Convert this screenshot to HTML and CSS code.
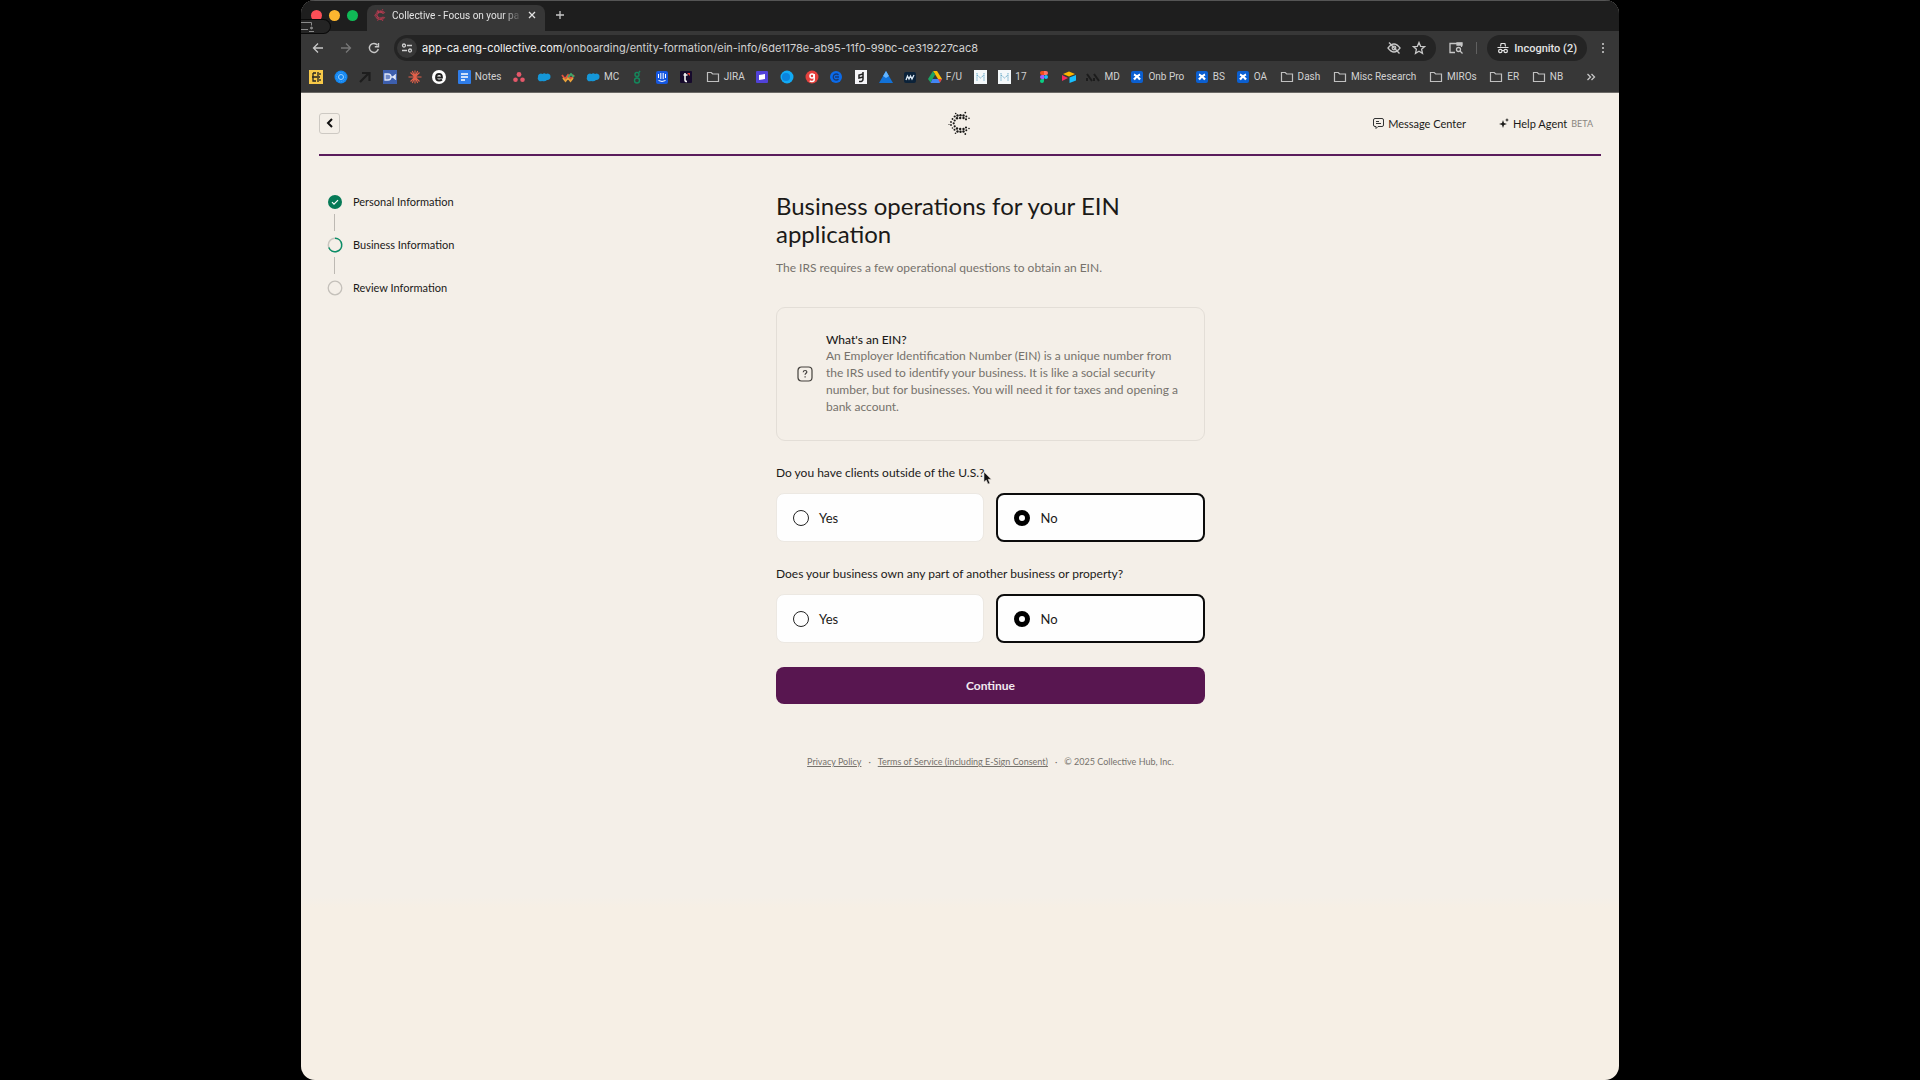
FILE: index.html
```html
<!DOCTYPE html>
<html lang="en">
<head>
<meta charset="utf-8">
<title>Collective - Focus on your passion</title>
<link rel="stylesheet" href="styles.css">
</head>
<body>
<div class="window">
  <header class="chrome">
    <div class="tabstrip">
      <div class="lights"><span class="light red"></span><span class="light yellow"></span><span class="light green"></span></div>
      <div class="share"><svg width="14" height="12" viewBox="0 0 14 12" fill="none" stroke="#8b8b8b"><path d="M0 1.500h10.500v3M0 8.500h7"/><circle cx="10.500" cy="7" r="1" fill="#8b8b8b"/><path d="M8 10.500h5"/></svg></div>
      <div class="tab">
        <svg width="12" height="12" viewBox="0 0 24 24"><use href="#dots" fill="#d2405a" stroke="#d2405a" stroke-width=".6"/></svg>
        <span class="tab-title">Collective - Focus on your pa</span>
        <button class="icon-btn" aria-label="Close tab"><svg width="8" height="8" viewBox="0 0 8 8" stroke="#e3e3e3" stroke-width="1.300"><path d="M1 1l6 6M7 1l-6 6"/></svg></button>
      </div>
      <button class="icon-btn new-tab" aria-label="New tab"><svg width="10" height="10" viewBox="0 0 10 10" stroke="#c7c7c7" stroke-width="1.300"><path d="M5 1v8M1 5h8"/></svg></button>
    </div>
    <div class="toolbar">
      <nav class="nav-btns">
        <button class="icon-btn" aria-label="Back"><svg width="12" height="12" viewBox="0 0 12 12" fill="none" stroke="#c7c7c7" stroke-width="1.300"><path d="M11 6H2M6 1.500L1.500 6 6 10.500"/></svg></button>
        <button class="icon-btn" aria-label="Forward"><svg width="12" height="12" viewBox="0 0 12 12" fill="none" stroke="#777" stroke-width="1.300"><path d="M1 6h9M6 1.500L10.500 6 6 10.500"/></svg></button>
        <button class="icon-btn" aria-label="Reload"><svg width="12" height="12" viewBox="0 0 12 12" fill="none" stroke="#c7c7c7" stroke-width="1.400"><path d="M10.300 7A4.500 4.500 0 1 1 9.500 3.200"/><path d="M10.500 1v3.700H6.800" /></svg></button>
      </nav>
      <div class="address">
        <span class="site-info"><svg width="12" height="12" viewBox="0 0 12 12" fill="none" stroke="#d0d0d0" stroke-width="1.300"><circle cx="3" cy="3.500" r="1.500"/><path d="M6 3.500h5M1 8.500h5"/><circle cx="9" cy="8.500" r="1.500"/></svg></span>
        <span class="url"><b>app-ca.eng-collective.com</b>/onboarding/entity-formation/ein-info/6de1178e-ab95-11f0-99bc-ce319227cac8</span>
        <svg width="14" height="14" viewBox="0 0 14 14" fill="none" stroke="#c7c7c7" stroke-width="1.300"><path d="M1 7q6-8 12 0q-6 8-12 0z"/><circle cx="7" cy="7" r="1.800"/><path d="M2 1.500l10.500 11"/></svg>
        <svg width="14" height="14" viewBox="0 0 14 14" fill="none" stroke="#c7c7c7" stroke-width="1.300"><path d="M7 1.500l1.600 3.800 4 .3-3 2.700.9 4L7 10.200l-3.500 2.100.9-4-3-2.700 4-.3z"/></svg>
      </div>
      <svg class="tab-search" width="14" height="12" viewBox="0 0 14 12" fill="none" stroke="#c7c7c7" stroke-width="1.300"><path d="M6 10.500H1V1.500h11.500V5"/><path d="M8 1h5v2H8z" fill="#c7c7c7"/><circle cx="9.500" cy="7.500" r="2"/><path d="M11 9l2.500 2.500"/></svg>
      <span class="divider"></span>
      <button class="incognito"><svg width="12" height="12" viewBox="0 0 12 12" fill="none" stroke="#e3e3e3" stroke-width="1.200"><path d="M3.500 4.500l.6-3h3.800l.6 3M.5 5.500h11"/><circle cx="3.300" cy="9" r="1.700"/><circle cx="8.700" cy="9" r="1.700"/><path d="M5 8.500h2"/></svg>Incognito (2)</button>
      <button class="icon-btn kebab" aria-label="Menu"><svg width="4" height="12" viewBox="0 0 4 12" fill="#c7c7c7"><circle cx="2" cy="2" r="1.100"/><circle cx="2" cy="6" r="1.100"/><circle cx="2" cy="10" r="1.100"/></svg></button>
    </div>
    <nav class="bookmarks" aria-label="Bookmarks">
      <a href="#"><svg viewBox="0 0 14 14"><path fill="#f7c948" d="M0 0h14v14H0z"/><path d="M4 3v8h3M4 3h3M9 2v4M9 8v4M3 7h8M11 3v2M11 9v2" stroke="#222" stroke-width="1.300" fill="none"/></svg></a>
      <a href="#"><svg viewBox="0 0 14 14"><circle cx="7" cy="7" r="6.500" fill="#1286f0"/><circle cx="7" cy="7" r="2.500" fill="none" stroke="#9ad0ff"/><circle cx="7" cy="7" r="4.500" fill="none" stroke="#4aa5f7" stroke-dasharray="1 1"/></svg></a>
      <a href="#"><svg viewBox="0 0 14 14" fill="none" stroke="#1d1d1d" stroke-width="2.200"><path d="M2 12l9-9M4 3h7.500v8"/></svg></a>
      <a href="#"><svg viewBox="0 0 14 14"><path fill="#3d5fae" d="M0 0h14v14H0z"/><path d="M2 4h3q3 0 3 3t-3 3H2zM8 7h5M13 4.500l-3 2.500 3 2.500" stroke="#dfe6f7" stroke-width="1.300" fill="#6f89c8"/></svg></a>
      <a href="#"><svg viewBox="0 0 14 14" stroke="#e2604a" stroke-width="1.100"><path d="M7 .5v13M.5 7h13M2.500 2.500l9 9M11.500 2.500l-9 9M4.300 1l5.400 12M9.700 1L4.300 13"/></svg></a>
      <a href="#"><svg viewBox="0 0 14 14"><circle cx="7" cy="7" r="7" fill="#fff"/><path d="M4 7.500h6q0-3.500-3-3.500t-3 3.500q0 3 3 3 2 0 3-1" fill="none" stroke="#222" stroke-width="1.800"/></svg></a>
      <a href="#"><svg viewBox="0 0 14 14"><rect x="1" width="13" height="14" rx="1" fill="#2f7de9"/><path d="M4 4h7M4 7h7M4 10h4" stroke="#fff" stroke-width="1.500"/></svg>Notes</a>
      <a href="#"><svg viewBox="0 0 14 14" fill="#e4586a"><circle cx="7" cy="4.500" r="2.400"/><circle cx="3.500" cy="9.800" r="2.300"/><circle cx="10.500" cy="9.800" r="2.300"/></svg></a>
      <a href="#"><svg viewBox="0 0 14 14"><use href="#cloud"/></svg></a>
      <a href="#"><svg viewBox="0 0 14 14" fill="none" stroke-width="1.800"><path d="M1 5l3 4 3-4 3 4 3-4" stroke="#e5533d"/><path d="M2 8l2.500 3L7 8l2.500 3L12 8" stroke="#e9a23b"/><path d="M7 7l3-3 3 3" stroke="#3fa66b"/></svg></a>
      <a href="#"><svg viewBox="0 0 14 14"><use href="#cloud"/></svg>MC</a>
      <a href="#"><svg viewBox="0 0 14 14" fill="none" stroke="#14885c" stroke-width="1.400"><circle cx="7" cy="4.500" r="2"/><path d="M9 2.500l1-1.500M7 6.500v1"/><circle cx="7" cy="10.500" r="2.500"/></svg></a>
      <a href="#"><svg viewBox="0 0 14 14"><rect x="1" y="1" width="12" height="13" rx="2" fill="#1557e0"/><path d="M3.500 4v4M5.800 3v6M8.200 3v6M10.500 4v4M3.500 10.500q3.500 2 7 0" stroke="#fff" fill="none"/></svg></a>
      <a href="#"><svg viewBox="0 0 14 14"><rect x="1" y="1" width="12" height="12" rx="1" fill="#160a2c"/><path d="M6 3v7q0 1.500 2 1.500M4.500 5h4" stroke="#f4f4f4" stroke-width="1.600" fill="none"/><path d="M8 3h3v3z" fill="#e33c35"/></svg></a>
      <a href="#" class="folder"><svg viewBox="0 0 14 14"><use href="#folder"/></svg>JIRA</a>
      <a href="#"><svg viewBox="0 0 14 14"><rect x="1" y="1" width="12" height="12" rx="1" fill="#5142d8"/><path d="M4 5l6-1v5l-6 1z" fill="#fff"/></svg></a>
      <a href="#"><svg viewBox="0 0 14 14"><circle cx="7" cy="7" r="6.500" fill="#12aaf5"/><circle cx="6" cy="7" r="4" fill="#0a84dd"/></svg></a>
      <a href="#"><svg viewBox="0 0 14 14"><circle cx="7" cy="7" r="6.500" fill="#e4413d"/><path d="M9.200 4v5.500q0 2-2.200 2-1.500 0-2.200-.8" fill="none" stroke="#fff" stroke-width="1.500"/><circle cx="7" cy="6" r="2" fill="none" stroke="#fff" stroke-width="1.500"/></svg></a>
      <a href="#"><svg viewBox="0 0 14 14"><circle cx="7" cy="7" r="6" fill="#0b6bea"/><path d="M9.500 5a3 3 0 1 0 0 4M6 7h4" fill="none" stroke="#173a75" stroke-width="1.300"/></svg></a>
      <a href="#"><svg viewBox="0 0 14 14"><path fill="#f5f5f8" d="M1 0h12v14H1z"/><path d="M9 2v7q0 3-4 2.500M9 4l-4 1v3l4-1" fill="none" stroke="#222" stroke-width="1.500"/></svg></a>
      <a href="#"><svg viewBox="0 0 14 14"><path d="M7 1l7 12H0z" fill="#1272d8"/><path d="M7 1l3 5-3 2-3-2z" fill="#62b4ff"/></svg></a>
      <a href="#"><svg viewBox="0 0 14 14"><rect x="1" y="2" width="12" height="11" rx="2" fill="#0b2239"/><path d="M3 10l1.500-4L6 9l1.500-3L9 9l2-4" stroke="#dbe7f2" stroke-width="1.300" fill="none"/></svg></a>
      <a href="#"><svg viewBox="0 0 14 14"><path d="M5 1h4l5 8h-4z" fill="#fbbc04"/><path d="M5 1l2.200 3.500L2.500 12.500 0 9z" fill="#1ea362"/><path d="M4.500 9H14l-2.500 4H2.500z" fill="#4285f4"/><path d="M10 9h4l-2 3.500z" fill="#ea4335"/></svg>F/U</a>
      <a href="#"><svg viewBox="0 0 14 14"><use href="#mark"/></svg></a>
      <a href="#"><svg viewBox="0 0 14 14"><use href="#mark"/></svg>17</a>
      <a href="#"><svg viewBox="0 0 14 14"><path d="M7 1H5a2 2 0 0 0 0 4h2z" fill="#f24e1e"/><path d="M7 1h2a2 2 0 0 1 0 4H7z" fill="#ff7262"/><path d="M7 5H5a2 2 0 0 0 0 4h2z" fill="#a259ff"/><circle cx="9" cy="7" r="2" fill="#1abcfe"/><path d="M7 9H5a2 2 0 1 0 2 2z" fill="#0acf83"/></svg></a>
      <a href="#"><svg viewBox="0 0 14 14"><path d="M1 4l6-2.500L13 4 7 6.500z" fill="#fcb400"/><path d="M7.500 7.500L14 5v5.500L7.500 13z" fill="#18bfff"/><path d="M0 5l6 3-6 3z" fill="#f82b60"/></svg></a>
      <a href="#"><svg viewBox="0 0 14 14" stroke="#1c1c1c" stroke-width="2"><path d="M1 4l5 7M8 4l5 7M1 8v3M8 8v3"/></svg>MD</a>
      <a href="#"><svg viewBox="0 0 14 14"><use href="#xapp"/></svg>Onb Pro</a>
      <a href="#"><svg viewBox="0 0 14 14"><use href="#xapp"/></svg>BS</a>
      <a href="#"><svg viewBox="0 0 14 14"><use href="#xapp"/></svg>OA</a>
      <a href="#" class="folder"><svg viewBox="0 0 14 14"><use href="#folder"/></svg>Dash</a>
      <a href="#" class="folder"><svg viewBox="0 0 14 14"><use href="#folder"/></svg>Misc Research</a>
      <a href="#" class="folder"><svg viewBox="0 0 14 14"><use href="#folder"/></svg>MIROs</a>
      <a href="#" class="folder"><svg viewBox="0 0 14 14"><use href="#folder"/></svg>ER</a>
      <a href="#" class="folder"><svg viewBox="0 0 14 14"><use href="#folder"/></svg>NB</a>
      <button class="icon-btn more" aria-label="More bookmarks"><svg width="10" height="8" viewBox="0 0 10 8" fill="none" stroke="#c7c7c7" stroke-width="1.300"><path d="M1.500 1l3 3-3 3M5.500 1l3 3-3 3"/></svg></button>
    </nav>
  </header>

  <div class="page">
    <header class="topbar">
      <button class="back" aria-label="Go back"><svg width="8" height="10" viewBox="0 0 8 10" fill="none" stroke="#111" stroke-width="2"><path d="M6 1L2 5l4 4"/></svg></button>
      <a href="#" class="logo" aria-label="Collective"><svg width="24" height="24" viewBox="0 0 24 24"><use href="#dots" fill="#1b1a18"/></svg></a>
      <nav class="links">
        <a href="#"><svg width="11" height="11" viewBox="0 0 11 11" fill="none" stroke="#333"><path d="M2 .5h7q1.500 0 1.500 1.500v5q0 1.500-1.500 1.500H5L3 10.500v-2H2Q.5 8.500.5 7V2Q.5.500 2 .5zM3 3.500h3M3 5.500h5"/></svg>Message Center</a>
        <a href="#"><svg width="10" height="10" viewBox="0 0 10 10" fill="#1b1a18"><path d="M4 2l1 3 3 1-3 1-1 3-1-3-3-1 3-1zM8 0l.6 1.600L10 2l-1.400.6L8 4l-.6-1.400L6 2l1.400-.4z"/></svg>Help Agent<span class="beta">BETA</span></a>
      </nav>
    </header>

    <div class="content">
      <ol class="steps">
        <li><svg width="16" height="16" viewBox="0 0 16 16"><circle cx="8" cy="8" r="7" fill="#067a57"/><path d="M5 8.200l2 2 4-4" fill="none" stroke="#fff" stroke-width="1.200"/></svg>Personal Information</li>
        <li><svg width="16" height="16" viewBox="0 0 16 16" fill="none" stroke-width="1.500"><circle cx="8" cy="8" r="6.700" stroke="#c9c5bf"/><path d="M8 1.300a6.700 6.700 0 1 1-6.200 9.200" stroke="#0a8f68"/></svg>Business Information</li>
        <li><svg width="16" height="16" viewBox="0 0 16 16" fill="none"><circle cx="8" cy="8" r="6.800" stroke="#c4c0ba" stroke-width="1.300"/></svg>Review Information</li>
      </ol>

      <main>
        <h1>Business operations for your EIN application</h1>
        <p class="lead">The IRS requires a few operational questions to obtain an EIN.</p>
        <section class="info">
          <svg width="16" height="16" viewBox="0 0 16 16" fill="none" stroke="#44413d" stroke-width="1.200"><rect x="1" y="1" width="14" height="14" rx="3.500"/><path d="M6.200 6.200q.2-1.700 1.900-1.700t1.700 1.500c0 1.300-1.700 1.200-1.700 2.800M8.100 10.300v1.200"/></svg>
          <div>
            <h2>What's an EIN?</h2>
            <p>An Employer Identification Number (EIN) is a unique number from the IRS used to identify your business. It is like a social security number, but for businesses. You will need it for taxes and opening a bank account.</p>
          </div>
        </section>
        <form>
          <fieldset>
            <legend>Do you have clients outside of the U.S.?<svg class="cursor" width="9" height="14" viewBox="0 0 9 14"><path d="M1 1v10l2.300-2 1.700 4 1.800-.8L5.200 8.300h3z" fill="#111" stroke="#d8d4ce" stroke-width=".6"/></svg></legend>
            <div class="options">
              <label><input type="radio" name="clients">Yes</label>
              <label><input type="radio" name="clients" checked>No</label>
            </div>
          </fieldset>
          <fieldset>
            <legend>Does your business own any part of another business or property?</legend>
            <div class="options">
              <label><input type="radio" name="owns">Yes</label>
              <label><input type="radio" name="owns" checked>No</label>
            </div>
          </fieldset>
          <button type="button" class="continue">Continue</button>
        </form>
        <footer><a href="#">Privacy Policy</a><span>·</span><a href="#">Terms of Service (including E-Sign Consent)</a><span>·</span><span>© 2025 Collective Hub, Inc.</span></footer>
      </main>
    </div>
  </div>
</div>

<svg class="defs" width="0" height="0" aria-hidden="true">
  <symbol id="cloud" viewBox="0 0 14 14"><path d="M1 7a3 3 0 0 1 4.500-3A3 3 0 0 1 9 4a3 3 0 0 1 4.500 3A3 3 0 0 1 10 10a4 3 0 0 1-5 1A3 3 0 0 1 1 7z" fill="#1597d8"/></symbol>
  <symbol id="folder" viewBox="0 0 14 14"><path d="M1.500 2.500h3.700l1.500 1.500h5.800v7.500h-11z" fill="none" stroke="#c0c0c0" stroke-width="1.200"/></symbol>
  <symbol id="mark" viewBox="0 0 14 14"><path fill="#f4f8fa" d="M1 0h13v14H1z"/><path d="M4 3v8M11 3v8M4 5l3.500 3L11 5" fill="none" stroke="#6faecb" stroke-dasharray="1.500 .6"/></symbol>
  <symbol id="xapp" viewBox="0 0 14 14"><rect x="1" y="1" width="12" height="12" rx="2" fill="#0b5fd0"/><path d="M4 4.500q3 1 6 5M10 4.500q-3 1-6 5" stroke="#fff" stroke-width="2.200" fill="none"/></symbol>
  <symbol id="dots" viewBox="0 0 24 24">
    <circle cx="9.500" cy="4.500" r="1.200"/><circle cx="12.500" cy="4.300" r="1.200"/><circle cx="15.500" cy="4.500" r="1.200"/>
    <circle cx="9" cy="7.300" r="1.200"/><circle cx="12.200" cy="7" r="1.200"/><circle cx="15.500" cy="7" r="1.200"/>
    <circle cx="18.300" cy="5.500" r="1"/><circle cx="18" cy="8.300" r="1.100"/><circle cx="21" cy="7.200" r=".8"/><circle cx="17.300" cy="1.600" r=".9"/>
    <circle cx="6.700" cy="5.500" r="1.100"/><circle cx="7.700" cy="2.500" r=".8"/><circle cx="4.500" cy="8" r=".9"/><circle cx="6.700" cy="9.500" r="1.100"/>
    <circle cx="5.700" cy="12.300" r="1.100"/><circle cx="3" cy="11" r=".9"/><circle cx="3" cy="14" r=".9"/><circle cx="1" cy="13.500" r=".6"/>
    <circle cx="6.700" cy="15.300" r="1.100"/><circle cx="9" cy="17.500" r="1.200"/><circle cx="12.200" cy="18" r="1.200"/><circle cx="15.500" cy="18" r="1.200"/>
    <circle cx="9.500" cy="20.500" r="1.200"/><circle cx="12.500" cy="20.700" r="1.200"/><circle cx="15.500" cy="20.500" r="1.200"/>
    <circle cx="18" cy="16.500" r="1.100"/><circle cx="18.300" cy="19.300" r="1"/><circle cx="21" cy="17.500" r=".8"/><circle cx="17.300" cy="23" r=".9"/>
    <circle cx="6.500" cy="18.700" r="1"/><circle cx="4.500" cy="17" r=".8"/><circle cx="7.500" cy="22.300" r=".8"/>
  </symbol>
</svg>
</body>
</html>
```
FILE: styles.css
```css
* { box-sizing: border-box; }

body {
  margin: 0;
  background: #000;
  color: #1b1a18;
  font-family: Lato, "Liberation Sans", sans-serif;
  font-size: 13px;
}

a { color: inherit; text-decoration: none; }
button { font: inherit; color: inherit; cursor: pointer; }
svg { display: block; flex: none; }
.defs { position: absolute; }

.window {
  display: flex;
  flex-direction: column;
  max-width: 1318px;
  min-height: 100vh;
  margin: 0 auto;
  border-radius: 14px;
  overflow: hidden;
  background: linear-gradient(#f4efe8 83%, #f6efe5 84%);
}

/* Browser frame */
.chrome {
  background: #373737;
  color: #d2d2d2;
  font-family: Roboto, "Liberation Sans", sans-serif;
  font-size: 10px;
  border-bottom: 1px solid #6b6966;
}

.icon-btn {
  display: flex;
  padding: 0;
  border: 0;
  background: none;
}

.tabstrip {
  position: relative;
  display: flex;
  align-items: center;
  height: 31px;
  padding-left: 10px;
  background: #1e1e1e;
  border-top: 1px solid #555;
}

.lights { display: flex; gap: 7px; margin: 0 9px 2px 0; }
.light { width: 11px; height: 11px; border-radius: 50%; }
.red { background: #fb4f57; }
.yellow { background: #fdb62f; }
.green { background: #10b956; }

.share {
  position: absolute;
  left: 0;
  top: 18px;
  width: 30px;
  height: 15px;
  padding-top: 1px;
  background: #242424;
  border: 1px solid #0a0a0a;
  border-left: 0;
  border-radius: 0 8px 8px 0;
}

.tab {
  display: flex;
  align-items: center;
  align-self: flex-end;
  gap: 6px;
  width: 178px;
  height: 26px;
  margin-right: 10px;
  padding: 0 9px 6px 7px;
  border-radius: 8px 8px 0 0;
  background: #373737;
  color: #e3e3e3;
}

.tab-title {
  flex: 1;
  white-space: nowrap;
  -webkit-mask-image: linear-gradient(90deg, #000 85%, transparent);
  mask-image: linear-gradient(90deg, #000 85%, transparent);
}

.new-tab { margin-bottom: 2px; }

.toolbar {
  display: flex;
  align-items: center;
  height: 34px;
  padding: 0 14px 0 11px;
}

.nav-btns { display: flex; gap: 16px; margin-right: 14px; }

.address {
  flex: 1;
  display: flex;
  align-items: center;
  gap: 11px;
  height: 26px;
  padding: 0 10px 0 3px;
  border-radius: 13px;
  background: #242424;
  font-family: Inter, "Liberation Sans", sans-serif;
  font-size: 11px;
}

.address b { font-weight: 400; color: #f4f4f4; }
.url { flex: 1; margin-left: -6px; }

.site-info {
  display: grid;
  place-items: center;
  width: 20px;
  height: 20px;
  border-radius: 50%;
  background: #373737;
}

.tab-search { margin: 0 13px; }
.divider { width: 1px; height: 12px; margin-right: 10px; background: #606060; }

.incognito {
  display: flex;
  align-items: center;
  gap: 5px;
  height: 26px;
  padding: 0 10px;
  border: 0;
  border-radius: 13px;
  background: #242424;
  color: #e3e3e3;
  font-size: 11px;
  font-weight: 500;
}

.kebab { margin-left: 14px; }

.bookmarks {
  display: flex;
  align-items: center;
  justify-content: space-between;
  height: 27px;
  padding: 0 23px 4px 8px;
}

.bookmarks a { display: flex; align-items: center; gap: 4px; white-space: nowrap; }
.bookmarks a svg { width: 14px; height: 14px; }
.bookmarks .folder { padding-left: 2px; }
.more { margin-left: 12px; }

/* Onboarding page */
.page { padding: 0 18px 40px; }

.topbar {
  display: grid;
  grid-template-columns: 1fr auto 1fr;
  align-items: center;
  height: 63px;
  padding-bottom: 1px;
  border-bottom: 2px solid #5a1c5c;
}

.back {
  display: grid;
  place-items: center;
  width: 21px;
  height: 21px;
  padding: 0;
  border: 1px solid #cdc9c3;
  border-radius: 3px;
  background: none;
}

.links {
  display: flex;
  justify-content: flex-end;
  gap: 33px;
  padding-right: 8px;
  font-size: 11px;
}

.links a { display: flex; align-items: center; gap: 4px; }
.beta { color: #8a8680; font-size: 9px; }

.content {
  display: grid;
  grid-template-columns: minmax(0, 15fr) minmax(0, 429px) minmax(0, 13fr);
}

.steps {
  display: flex;
  flex-direction: column;
  gap: 27px;
  margin: 38px 0 0;
  padding: 0 0 0 8px;
  list-style: none;
  font-size: 11px;
  line-height: 16px;
}

.steps li { position: relative; display: flex; gap: 10px; }

.steps li + li::before {
  content: "";
  position: absolute;
  left: 7px;
  bottom: 22px;
  width: 1px;
  height: 17px;
  background: #bdb9b3;
}

main { padding-top: 36px; }

h1 {
  margin: 0;
  font-size: 24px;
  font-weight: 400;
  line-height: 28px;
}

.lead {
  margin: 11px 0 30px;
  color: #76726c;
  font-size: 12px;
  line-height: 18px;
}

.info {
  display: flex;
  align-items: center;
  gap: 13px;
  padding: 24px 20px 25px;
  border: 1px solid #e3ded7;
  border-radius: 9px;
  font-size: 12px;
  line-height: 17px;
}

.info h2 { margin: 0; font-size: 12px; font-weight: 500; line-height: 15px; }
.info p { margin: 0; color: #76726c; }

fieldset { min-width: 0; margin: 23px 0 0; padding: 0; border: 0; }

legend {
  position: relative;
  margin: 0 0 11px;
  padding: 0;
  font-size: 12px;
  line-height: 18px;
}

.cursor { position: absolute; right: -8px; top: 7px; }

.options { display: grid; grid-template-columns: 1fr 1fr; gap: 12px; }

.options label {
  display: flex;
  align-items: center;
  gap: 10px;
  height: 49px;
  padding: 0 16px;
  border: 1px solid #ece8e2;
  border-radius: 8px;
  background: #fefefe;
}

.options label:has(input:checked) { border: 2px solid #0c0c0c; padding: 0 16px; }

.options input {
  appearance: none;
  width: 16px;
  height: 16px;
  margin: 0;
  border: 1px solid #222;
  border-radius: 50%;
}

.options input:checked { border: 5px solid #000; }

.continue {
  display: block;
  width: 100%;
  height: 37px;
  margin-top: 24px;
  border: 0;
  border-radius: 8px;
  background: #581650;
  color: #f2eaf1;
  font-size: 12px;
  font-weight: 700;
}

footer {
  display: flex;
  justify-content: center;
  gap: 7px;
  margin-top: 50px;
  color: #76726c;
  font-size: 9px;
  line-height: 16px;
}

footer a { text-decoration: underline; }
```
